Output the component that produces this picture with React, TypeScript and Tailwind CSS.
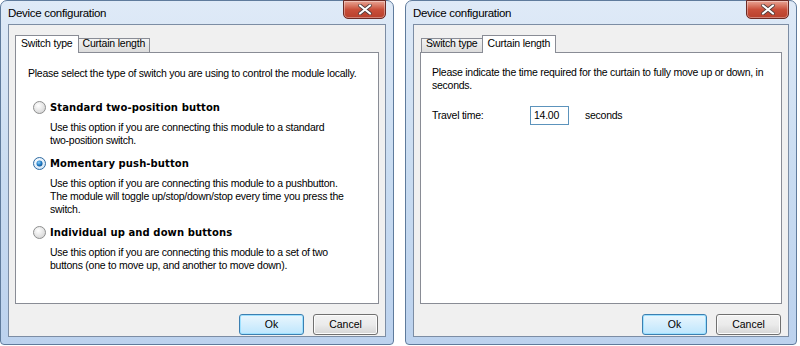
import { ReactNode } from "react";

const font = { fontFamily: '"Liberation Sans", Arial, sans-serif' };
const boldFont = { fontFamily: '"DejaVu Sans", Tahoma, sans-serif' };

function CloseButton() {
  return (
    <div className="mt-[-1px] flex h-[19px] w-[43px] items-center justify-center rounded-b-[5px] border border-[#6b2a24] bg-gradient-to-b from-[#e8a494] via-[#c94f3a] to-[#b8402c] shadow-[inset_0_0_0_1px_rgba(255,255,255,0.35)]">
      <svg width="14" height="11" viewBox="0 0 14 11">
        <path d="M2 1.5 L12 9.5 M12 1.5 L2 9.5" stroke="#4a3a3a" strokeWidth="3.6" strokeLinecap="round" />
        <path d="M2 1.5 L12 9.5 M12 1.5 L2 9.5" stroke="#ffffff" strokeWidth="2.2" strokeLinecap="round" />
      </svg>
    </div>
  );
}

function Radio({ checked }: { checked?: boolean }) {
  return (
    <svg width="13" height="13" viewBox="0 0 13 13" className="shrink-0">
      <defs>
        <radialGradient id={checked ? "rgc" : "rgu"} cx="0.4" cy="0.35" r="0.7">
          <stop offset="0" stopColor="#ffffff" />
          <stop offset="1" stopColor={checked ? "#cfe4f7" : "#d4d4d4"} />
        </radialGradient>
        <radialGradient id="dot" cx="0.4" cy="0.35" r="0.7">
          <stop offset="0" stopColor="#8fd0f7" />
          <stop offset="0.6" stopColor="#1d7ac6" />
          <stop offset="1" stopColor="#0f4f8a" />
        </radialGradient>
      </defs>
      <circle cx="6.5" cy="6.5" r="6" fill={`url(#${checked ? "rgc" : "rgu"})`} stroke={checked ? "#2f6aa0" : "#8e8f8f"} />
      {checked && <circle cx="6.5" cy="6.5" r="3" fill="url(#dot)" />}
    </svg>
  );
}

function Button({ children, focused }: { children: ReactNode; focused?: boolean }) {
  return (
    <div
      className={`flex h-[21px] w-[65px] items-center justify-center rounded-[3px] border text-[10.5px] text-black ${
        focused
          ? "border-[#3c7fb1] bg-gradient-to-b from-[#eaf6fd] to-[#bee6fd] shadow-[inset_0_0_0_1px_#9ee1ff]"
          : "border-[#707070] bg-gradient-to-b from-[#f2f2f2] via-[#ebebeb] to-[#d6d6d6] shadow-[inset_0_0_0_1px_#fcfcfc]"
      }`}
    >
      {children}
    </div>
  );
}

function Tab({ label, active }: { label: string; active?: boolean }) {
  return active ? (
    <div className="relative z-10 -mx-[1px] mb-[-1px] flex h-[18px] items-end whitespace-nowrap border border-b-0 border-[#898c95] bg-white px-[5px] pb-[1px] text-[10.5px] tracking-[-0.2px]">
      {label}
    </div>
  ) : (
    <div className="mt-[4px] flex h-[14px] items-end whitespace-nowrap border border-b-0 border-[#898c95] bg-gradient-to-b from-[#f3f3f3] to-[#dcdcdc] px-[4px] text-[10.5px] tracking-[-0.2px]">
      {label}
    </div>
  );
}

function Window({ children, tab, width }: { children: ReactNode; tab: 0 | 1; width: string }) {
  return (
    <div
      className={`${width} flex h-[345px] shrink-0 flex-col rounded-t-[7px] rounded-b-[4px] border border-[#5f7b9c] bg-gradient-to-b from-[#dfeaf7] via-[#c9dcf1] to-[#bcd2ee] px-[7px] pb-[7px]`}
    >
      <div className="flex h-[23px] items-start justify-between">
        <div className="mt-[4px] whitespace-nowrap text-[11.5px] tracking-[-0.3px] text-black">Device configuration</div>
        <CloseButton />
      </div>
      <div className="flex flex-1 flex-col border border-[#7c8da4] bg-[#f0f0f0] px-[6px] pt-[9px]">
        <div className="flex items-end pl-[1px]">
          <Tab label="Switch type" active={tab === 0} />
          <Tab label="Curtain length" active={tab === 1} />
        </div>
        <div className="h-[252px] overflow-hidden border border-[#898c95] bg-white">{children}</div>
        <div className="flex justify-end gap-[9px] pt-[10px] pr-[1px]">
          <Button focused>Ok</Button>
          <Button>Cancel</Button>
        </div>
      </div>
    </div>
  );
}

const options = [
  {
    title: "Standard two-position button",
    lines: ["Use this option if you are connecting this module to a standard", "two-position switch."],
  },
  {
    title: "Momentary push-button",
    checked: true,
    lines: [
      "Use this option if you are connecting this module to a pushbutton.",
      "The module will toggle up/stop/down/stop every time you press the",
      "switch.",
    ],
  },
  {
    title: "Individual up and down buttons",
    lines: ["Use this option if you are connecting this module to a set of two", "buttons (one to move up, and another to move down)."],
  },
];

export default function App() {
  return (
    <div className="flex h-[346px] w-[800px] gap-[11px] bg-white text-black" style={font}>
      <Window tab={0} width="w-[394px]">
        <div className="whitespace-nowrap px-[12px] pt-[14px] text-[10.5px] leading-[13px] tracking-[-0.25px]">
          <p>Please select the type of switch you are using to control the module locally.</p>
          <div className="mt-[21px] flex flex-col gap-[10px]">
            {options.map((o) => (
              <div key={o.title} className="pl-[5px]">
                <div className="flex items-center gap-[4px]">
                  <Radio checked={o.checked} />
                  <span className="text-[10px] font-bold tracking-[0.1px]" style={boldFont}>
                    {o.title}
                  </span>
                </div>
                <div className="mt-[7px] pl-[17px]">
                  {o.lines.map((l) => (
                    <div key={l}>{l}</div>
                  ))}
                </div>
              </div>
            ))}
          </div>
        </div>
      </Window>
      <Window tab={1} width="w-[392px]">
        <div className="whitespace-nowrap px-[11px] pt-[13px] text-[10.5px] leading-[13px] tracking-[-0.25px]">
          <p>Please indicate the time required for the curtain to fully move up or down, in</p>
          <p>seconds.</p>
          <div className="mt-[14px] flex items-center">
            <span className="w-[98px]">Travel time:</span>
            <div className="flex h-[19px] w-[39px] items-center border border-[#5c93bc] bg-white pl-[3px]">14.00</div>
            <span className="ml-[16px]">seconds</span>
          </div>
        </div>
      </Window>
    </div>
  );
}
